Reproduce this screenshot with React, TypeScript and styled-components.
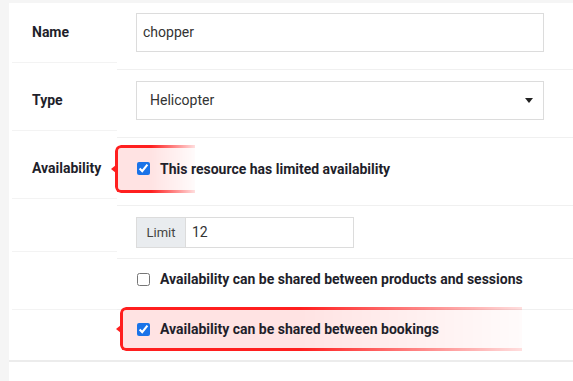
import styled, { createGlobalStyle } from 'styled-components';

const GlobalStyle = createGlobalStyle`
  html, body {
    margin: 0;
    padding: 0;
    background: #f5f5f5;
    font-family: Roboto, 'Liberation Sans', sans-serif;
    color: #222;
  }
`;

const Panel = styled.div`
  margin: 3px 0 0 9px;
  background: #fff;
  min-height: 378px;
`;

const Row = styled.div<{ $h: number; $last?: boolean }>`
  display: grid;
  grid-template-columns: 108px 1fr;
  height: ${(p) => p.$h}px;
  box-sizing: border-box;
  border-bottom: ${(p) => (p.$last ? '2px solid #ececec' : 'none')};
`;

const LabelCell = styled.div<{ $lift: number; $pt: number; $plain?: boolean }>`
  margin: 0 0 ${(p) => p.$lift}px 3px;
  padding: ${(p) => p.$pt}px 0 0 20px;
  border-bottom: ${(p) => (p.$plain ? 'none' : '1px solid #f3f3f3')};
  font-size: 14px;
  font-weight: 700;
  line-height: 39px;
  color: #1f1f2b;
`;

const ValueCell = styled.div<{ $pt: number; $line?: boolean }>`
  position: relative;
  padding: ${(p) => p.$pt}px 29px 0 19px;
  border-bottom: ${(p) => (p.$line ? '1px solid #f0f0f0' : 'none')};
`;

const TextInput = styled.div`
  height: 39px;
  box-sizing: border-box;
  border: 1px solid #dcdcdc;
  padding-left: 6px;
  font-size: 14px;
  line-height: 37px;
  color: #333;
`;

const Select = styled(TextInput)`
  display: flex;
  align-items: center;
  justify-content: space-between;
  padding: 0 10px 0 13px;
`;

const Caret = styled.span`
  width: 0;
  height: 0;
  border-left: 4px solid transparent;
  border-right: 4px solid transparent;
  border-top: 5px solid #222;
`;

const InputGroup = styled.div`
  display: flex;
  width: 218px;
  height: 31px;
  box-sizing: border-box;
  border: 1px solid #dcdcdc;
`;

const Addon = styled.span`
  width: 48px;
  background: #e9ecef;
  border-right: 1px solid #dcdcdc;
  font-size: 13px;
  line-height: 29px;
  text-align: center;
  color: #444;
`;

const AddonValue = styled.span`
  padding-left: 6px;
  font-size: 14px;
  line-height: 29px;
  color: #333;
`;

const CheckRow = styled.label<{ $h: number }>`
  position: relative;
  z-index: 1;
  display: flex;
  align-items: center;
  gap: 10px;
  height: ${(p) => p.$h}px;
  padding-left: 1px;
  font-size: 14px;
  font-weight: 700;
  color: #1f1f2b;
`;

const Box = styled.input`
  width: 13px;
  height: 13px;
  margin: 0;
  accent-color: #1a73e8;
`;

const Callout = styled.div<{ $left: number; $top: number; $w: number; $hh: number }>`
  position: absolute;
  z-index: 0;
  left: ${(p) => p.$left}px;
  top: ${(p) => p.$top}px;
  width: ${(p) => p.$w}px;
  height: ${(p) => p.$hh}px;

  &::before {
    content: '';
    position: absolute;
    left: -4px;
    top: 50%;
    margin-top: -4px;
    border-top: 4px solid transparent;
    border-bottom: 4px solid transparent;
    border-right: 5px solid #ff1f1f;
  }
`;

const CalloutFade = styled.div`
  height: 100%;
  box-sizing: border-box;
  border: 3px solid #ff1f1f;
  border-right: none;
  border-radius: 6px 0 0 6px;
  background: #ffe3e3;
  -webkit-mask-image: linear-gradient(to right, #000 45%, rgba(0, 0, 0, 0.15) 100%);
  mask-image: linear-gradient(to right, #000 45%, rgba(0, 0, 0, 0.15) 100%);
`;

export default function App() {
  return (
    <>
      <GlobalStyle />
      <Panel>
        <Row $h={67}>
          <LabelCell $lift={7} $pt={10}>Name</LabelCell>
          <ValueCell $pt={10} $line>
            <TextInput>chopper</TextInput>
          </ValueCell>
        </Row>
        <Row $h={68}>
          <LabelCell $lift={7} $pt={11}>Type</LabelCell>
          <ValueCell $pt={11} $line>
            <Select>
              Helicopter
              <Caret />
            </Select>
          </ValueCell>
        </Row>
        <Row $h={68}>
          <LabelCell $lift={7} $pt={11}>Availability</LabelCell>
          <ValueCell $pt={11} $line>
            <Callout $left={-2} $top={7} $w={80} $hh={48}>
              <CalloutFade />
            </Callout>
            <CheckRow $h={39}>
              <Box type="checkbox" defaultChecked />
              This resource has limited availability
            </CheckRow>
          </ValueCell>
        </Row>
        <Row $h={53}>
          <LabelCell $lift={7} $pt={0} />
          <ValueCell $pt={11} $line>
            <InputGroup>
              <Addon>Limit</Addon>
              <AddonValue>12</AddonValue>
            </InputGroup>
          </ValueCell>
        </Row>
        <Row $h={51}>
          <LabelCell $lift={0} $pt={0} />
          <ValueCell $pt={11} $line>
            <CheckRow $h={18}>
              <Box type="checkbox" />
              Availability can be shared between products and sessions
            </CheckRow>
          </ValueCell>
        </Row>
        <Row $h={52} $last>
          <LabelCell $lift={0} $pt={0} $plain />
          <ValueCell $pt={10}>
            <Callout $left={3} $top={-3} $w={402} $hh={44}>
              <CalloutFade />
            </Callout>
            <CheckRow $h={18}>
              <Box type="checkbox" defaultChecked />
              Availability can be shared between bookings
            </CheckRow>
          </ValueCell>
        </Row>
      </Panel>
    </>
  );
}
